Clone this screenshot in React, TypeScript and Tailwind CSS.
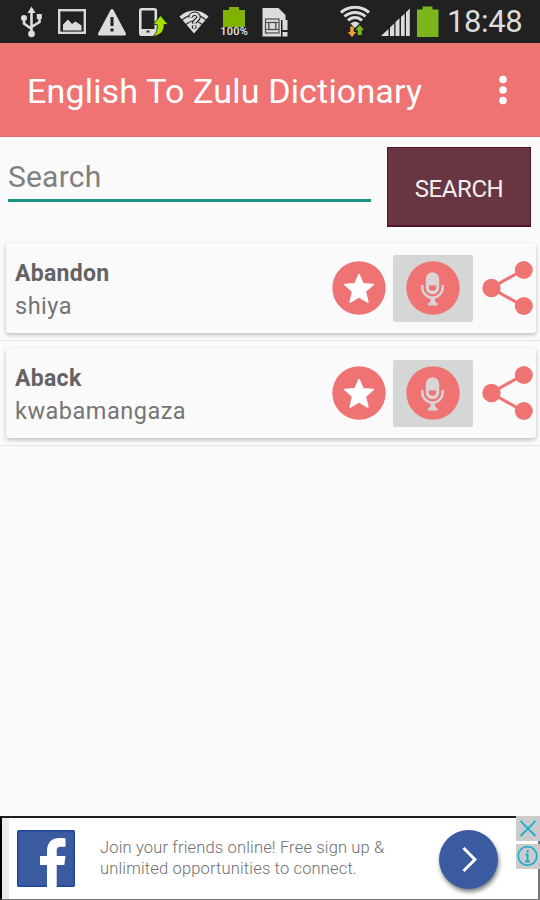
import React from 'react';

interface Entry {
  word: string;
  meaning: string;
}

const entries: Entry[] = [
  { word: 'Abandon', meaning: 'shiya' },
  { word: 'Aback', meaning: 'kwabamangaza' },
];

const NotificationIcons: React.FC = () => (
  <div className="ml-[11px] grid grid-cols-7 w-[284px] items-center justify-items-center">
    {/* USB */}
    <svg width="22" height="32" viewBox="20 6 22 32" fill="none" stroke="#dcdcdc" strokeWidth="2.6">
      <path d="M31.5 12v22M24 20v3.5l7.5 5.5M39.5 17v5l-8 5" />
      <path d="M31.5 6.5l4 6.5h-8z" fill="#dcdcdc" stroke="none" />
      <circle cx="24" cy="18" r="3" fill="#dcdcdc" stroke="none" />
      <path d="M36.8 14h5v5h-5z" fill="#dcdcdc" stroke="none" />
      <circle cx="31.5" cy="33.8" r="3.4" fill="#dcdcdc" stroke="none" />
    </svg>
    {/* Gallery */}
    <svg width="30" height="28" viewBox="56 8 30 28">
      <rect x="58.2" y="10.2" width="25.6" height="22.6" fill="none" stroke="#d6d6d6" strokeWidth="2.4" />
      <path d="M62 30.5v-6l5-5 4 4.5 3.5-2.5 6 4v5z" fill="#dcdcdc" />
    </svg>
    {/* Warning */}
    <svg width="30" height="28" viewBox="97 8 30 28">
      <path d="M112 10.5L124.5 34h-25z" fill="#dcdcdc" stroke="#dcdcdc" strokeWidth="3" strokeLinejoin="round" />
      <path d="M112 17v9M112 28.5v3" stroke="#222" strokeWidth="3" />
    </svg>
    {/* Phone update */}
    <svg width="30" height="30" viewBox="137 6 30 30">
      <rect x="139.3" y="8.3" width="15.5" height="25.5" rx="1.5" fill="none" stroke="#dcdcdc" strokeWidth="2.6" />
      <path d="M139 28h16v6h-16z" fill="#dcdcdc" />
      <path d="M145.5 29.5h3v2h-3z" fill="#333" />
      <path d="M159.5 14.5l7.5 9h-4c.5 7-4 11-11.5 12 3.5-2.5 5-6 4.7-12h-4z" fill="#a4e000" stroke="#222" strokeWidth=".8" />
    </svg>
    {/* Unknown wifi */}
    <svg width="30" height="28" viewBox="178 8 30 28">
      <path d="M178.5 16.5c8-8 21-8 29 0l-14.5 17z" fill="#dcdcdc" />
      <path d="M181 20c7-6.5 17-6.5 24 0M185 24.5c5-4.5 11-4.5 16 0" fill="none" stroke="#333" strokeWidth="1.2" />
      <path d="M189.5 17.5c0-5 8-5 8-.5 0 3.5-4.3 3-4.3 6.5M193.2 25.5v3" fill="none" stroke="#222" strokeWidth="4.6" />
      <path d="M189.5 17.5c0-5 8-5 8-.5 0 3.5-4.3 3-4.3 6.5M193.2 25.5v2.5" fill="none" stroke="#dcdcdc" strokeWidth="2.4" />
    </svg>
    {/* Battery level */}
    <div className="flex flex-col items-center">
      <svg width="22" height="20" viewBox="222 7 22 20">
        <path d="M222 10h6v-3h10v3h6v17h-22z" fill="#7fb300" />
      </svg>
      <span className="text-[11px] leading-[10px] font-medium tracking-[0.2px] text-[#e8e8e8]">100%</span>
    </div>
    {/* SIM */}
    <svg width="26" height="30" viewBox="261 6.5 26 30">
      <path d="M261.5 7.5h16l7 7v5h-4.5v16.5h-18.5z" fill="#dcdcdc" />
      <rect x="264.5" y="18.5" width="13.5" height="14" fill="#dcdcdc" stroke="#4b4b4b" strokeWidth="1.2" />
      <rect x="267.8" y="22" width="7" height="7" fill="#dcdcdc" stroke="#4b4b4b" strokeWidth="1.3" />
      <path d="M264.5 22h3M264.5 29h3M275 22h3M275 29h3" stroke="#4b4b4b" />
      <path d="M281.5 19.5h5v10h-5zM281.5 31.5h5v4.5h-5z" fill="#dcdcdc" />
    </svg>
  </div>
);

const StatusBar: React.FC = () => (
  <div className="flex h-[43px] items-center bg-[#212121]">
    <NotificationIcons />
    <svg className="ml-[45px]" width="30" height="32" viewBox="340 5 30 32" fill="none">
      <path d="M341 11.5c8-7 20-7 28 0M344.5 15.5c6-5.5 15-5.5 21 0M348 19.5c4-4 10-4 14 0" stroke="#dcdcdc" strokeWidth="3" />
      <path d="M350.5 22.5c3-2.5 6-2.5 9 0l-4.5 4.5z" fill="#dcdcdc" />
      <path d="M350.2 25.5h3.6v5.5h2.5l-4.3 5-4.3-5h2.5z" fill="#eda035" />
      <path d="M359.7 24l4.3 5h-2.3v5h-4v-5h-2.3z" fill="#7bb51c" />
    </svg>
    <svg className="ml-[11px]" width="29" height="28" viewBox="381 8 29 28" fill="#dcdcdc">
      <path d="M381 36l7.5-7v7zM390 27.5l4.2-4v12.5h-4.2zM395.5 22l4-3.8v17.8h-4zM401 17l3.7-3.5v22.5h-3.7zM406 12.2l3.8-3.6v27.4h-3.8z" />
    </svg>
    <svg className="ml-[7px]" width="22" height="31" viewBox="417 6 22 31">
      <path d="M417 9.5h5.5v-3h10v3h6v27.5h-21.5z" fill="#7ab61c" />
    </svg>
    <span className="ml-[8px] text-[31px] leading-none tracking-[-0.4px] whitespace-nowrap text-[#dcdcdc]">18:48</span>
  </div>
);

const StarButton: React.FC = () => (
  <svg width="54" height="54" viewBox="0 0 54 54">
    <circle cx="27" cy="27" r="26.7" fill="#ef7373" />
    <path
      d="M27 13.5l4 9.2 10.3.8-8 7 2.5 10.5-8.8-5.3-8.8 5.3 2.5-10.5-8-7 10.3-.8z"
      fill="#fff"
      stroke="#fff"
      strokeWidth="1.6"
      strokeLinejoin="round"
    />
  </svg>
);

const MicButton: React.FC = () => (
  <div className="flex h-[67px] w-[80px] items-center justify-center rounded-[2px] bg-[#d5d7d6]">
    <svg width="54" height="54" viewBox="0 0 54 54">
      <circle cx="27" cy="27" r="26.7" fill="#ef7373" />
      <rect x="19.8" y="11.3" width="13.4" height="22" rx="6.7" fill="#dad5d4" />
      <path d="M22.8 24.5h7.5v1.5a3.75 3.75 0 0 1-7.5 0z" fill="#ef7373" />
      <path d="M16.3 24v2.5a10.2 10.2 0 0 0 20.4 0V24" fill="none" stroke="#dad5d4" strokeWidth="2.4" />
      <path d="M24.5 36.5h4.5v4l2.5 2v2h-9.5v-2l2.5-2z" fill="#dad5d4" />
    </svg>
  </div>
);

const ShareButton: React.FC = () => (
  <svg width="51" height="54" viewBox="0 0 51 54">
    <path d="M41 9L9 27l32 18" fill="none" stroke="#ef7373" strokeWidth="3" />
    <g fill="#ef7373">
      <circle cx="41.8" cy="9" r="9" />
      <circle cx="9.5" cy="27" r="9.2" />
      <circle cx="41.8" cy="45" r="9" />
    </g>
  </svg>
);

const EntryRow: React.FC<{ entry: Entry }> = ({ entry }) => (
  <li className="h-[105px] border-b border-[#e4e4e4] pt-[7px] pr-[4px] pl-[6px]">
    <div className="flex h-[90px] items-center rounded-[3px] bg-[#fafafa] pl-[9px] shadow-[0_2px_4px_rgba(0,0,0,0.24)]">
      <div className="flex-1 pt-[4px] text-[#757575]">
        <p className="text-[23px] leading-[32px] font-bold tracking-[0.3px] text-[#636363]">{entry.word}</p>
        <p className="text-[23.5px] leading-[32px] tracking-[0.5px]">{entry.meaning}</p>
      </div>
      <div className="flex items-center pr-[3px]">
        <StarButton />
        <div className="ml-[7px]">
          <MicButton />
        </div>
        <div className="ml-[9px]">
          <ShareButton />
        </div>
      </div>
    </div>
  </li>
);

const AdBanner: React.FC = () => (
  <div className="relative mt-auto flex h-[84px] items-center border-t-2 border-b border-l-2 border-t-[#1f1f22] border-b-[#777] border-l-black bg-white">
    <div className="h-full w-[7px] bg-[#ececec]" />
    <svg className="ml-[8px]" width="58" height="57" viewBox="0 0 58 57">
      <rect x=".7" y=".7" width="56.6" height="55.6" rx="1" fill="#3b5ba0" stroke="#1c4698" strokeWidth="1.4" />
      <path d="M30 57V35h-7v-9h7v-5c0-8.5 5-13 12.5-13 3 0 5 .2 6 .4v8.4h-4.5c-3.5 0-4.3 1.7-4.3 4.3V26h8.8l-1.2 9h-7.6v22z" fill="#fff" />
    </svg>
    <p className="ml-[25px] pb-[2px] text-[16.5px] leading-[21px] font-light tracking-[0.16px] whitespace-nowrap text-[#6f6f6f]">
      Join your friends online! Free sign up &amp;
      <br />
      unlimited opportunities to connect.
    </p>
    <div className="absolute top-[12px] left-[437px] flex h-[59px] w-[59px] items-center justify-center rounded-full bg-[#3b5ba0] shadow-[1px_3px_4px_rgba(0,0,0,0.5)]">
      <svg width="16" height="26" viewBox="0 0 16 26" fill="none" stroke="#fff" strokeWidth="3">
        <path d="M2.5 1l11.5 11.5L2.5 24" />
      </svg>
    </div>
    <div className="absolute top-0 right-0 h-full w-[2px] bg-[#777]" />
    <div className="absolute -top-[2px] right-0 flex flex-col gap-[3px]">
      <svg width="24" height="25" viewBox="0 0 24 25" fill="none" stroke="#1fadd0" strokeWidth="1.8">
        <rect width="24" height="25" fill="#cbcbcb" stroke="none" />
        <path d="M4.5 5l15 15M19.5 5l-15 15" />
      </svg>
      <svg width="24" height="25" viewBox="0 0 24 25" fill="none" stroke="#1fadd0" strokeWidth="1.7">
        <rect width="24" height="25" fill="#cbcbcb" stroke="none" />
        <circle cx="11.5" cy="12" r="9.3" />
        <path d="M11.5 6v2.5M9.5 10.5h2v7M9 17.5h5" strokeWidth="2" />
      </svg>
    </div>
  </div>
);

const App: React.FC = () => {
  return (
    <div className="flex h-[900px] w-[540px] flex-col overflow-hidden bg-[#fafafa] font-[Roboto,sans-serif]">
      <StatusBar />

      {/* Toolbar */}
      <header className="flex h-[94px] items-center justify-between border-b border-[#e46c6c] bg-[#ef7373] pr-[33px] pl-[27px] text-white">
        <h1 className="pt-[3px] text-[34px] leading-none tracking-[0.17px] whitespace-nowrap">English To Zulu Dictionary</h1>
        <svg className="mt-px" width="8" height="30" viewBox="0 0 8 30" fill="currentColor">
          <circle cx="4" cy="4.5" r="3.8" />
          <circle cx="4" cy="15" r="3.8" />
          <circle cx="4" cy="25.5" r="3.8" />
        </svg>
      </header>

      {/* Search form */}
      <div className="flex h-[99px] items-start justify-between pt-[10px] pr-[9px] pl-[8px]">
        <div className="h-[55px] w-[363px] border-b-[3px] border-[#189580] pt-[13px]">
          <input
            className="w-full text-[30px] leading-[34px] tracking-[0.2px] text-[#757575] outline-none placeholder:text-[#808080]"
            placeholder="Search"
          />
        </div>
        <button className="h-[80px] w-[144px] border border-b-2 border-[#521326] bg-[#683641] pt-[5px] text-[24px] tracking-[-0.4px] text-[#f5eef0]">
          SEARCH
        </button>
      </div>

      <ul>
        {entries.map((entry) => (
          <EntryRow key={entry.word} entry={entry} />
        ))}
      </ul>

      <AdBanner />
    </div>
  );
};

export default App;
